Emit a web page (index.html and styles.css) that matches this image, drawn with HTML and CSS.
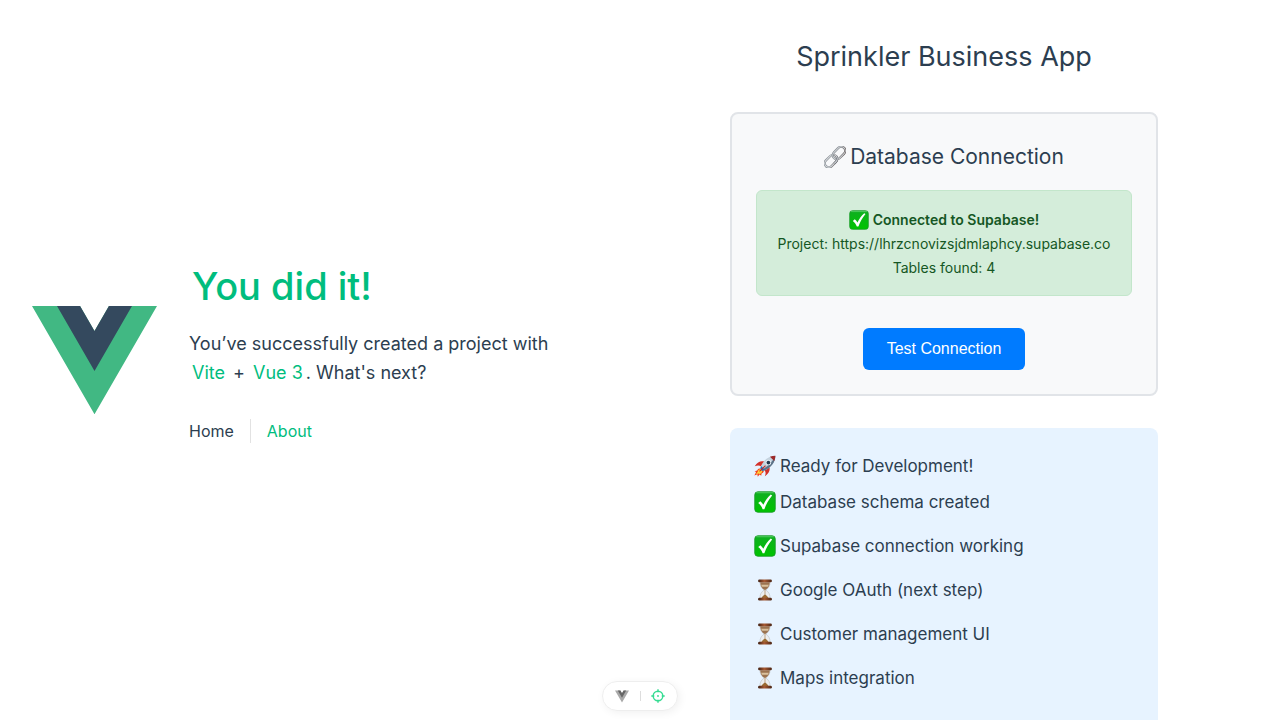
FILE: index.html
```html
<!DOCTYPE html>
<html lang="en">
<head>
<meta charset="utf-8">
<meta name="viewport" content="width=device-width, initial-scale=1">
<title>Sprinkler Business App</title>
<link rel="stylesheet" href="styles.css">
</head>
<body>
<svg class="sprite" aria-hidden="true">
  <defs>
    <linearGradient id="g-check" x1="0" y1="0" x2="0" y2="1"><stop offset="0" stop-color="#0fae22"/><stop offset="1" stop-color="#00c400"/></linearGradient>
    <linearGradient id="g-wood" x1="0" y1="0" x2="1" y2="0"><stop offset="0" stop-color="#3d1c0e"/><stop offset=".45" stop-color="#a85a33"/><stop offset="1" stop-color="#4a2413"/></linearGradient>
    <linearGradient id="g-link" x1="0" y1="0" x2="1" y2="1"><stop offset="0" stop-color="#7f858b"/><stop offset=".5" stop-color="#8d9297"/><stop offset="1" stop-color="#51433f"/></linearGradient>
  </defs>
  <symbol id="check" viewBox="0 0 24 24">
    <rect x=".8" y=".8" width="22.400" height="22.400" rx="3.500" fill="url(#g-check)" stroke="#1c9a2b" stroke-width=".9"/>
    <path d="M2.500 1.900h19" stroke="#6bd878" stroke-width=".8"/>
    <path d="M4.600 13.200 6.900 11.200c1.500 1.100 2.500 2.400 3.300 3.700C12 10.800 14.800 6.900 18.300 3.800l1.500 1C16 9.300 13.200 14.300 11.300 19.900H9.400C8.400 17 6.900 15 4.600 13.200Z" fill="#fff"/>
  </symbol>
  <symbol id="hourglass" viewBox="0 0 24 24">
    <path d="M6.500 3h11c0 4.500-1.500 6.800-4.600 9 3.100 2.200 4.600 4.500 4.600 9h-11c0-4.500 1.500-6.800 4.600-9-3.100-2.200-4.600-4.500-4.600-9Z" fill="#eceeef" stroke="#bcc0c3" stroke-width=".7"/>
    <path d="M6.800 3.500h10.400c0 4-1.700 6.300-4.600 8.300h-1.200C8.500 9.800 6.800 7.500 6.800 3.500Z" fill="#9b7350"/>
    <path d="M7.800 6.200h8.400l-1 2.300H8.800Z" fill="#d9c09c"/>
    <path d="M11.700 11h.6v5.500h-.6ZM8.200 20.800c.6-1.800 2-2.600 3.800-4.300 1.800 1.700 3.200 2.500 3.800 4.300Z" fill="#9a6b33"/>
    <rect x="4.500" y=".6" width="15" height="2.900" rx="1.300" fill="url(#g-wood)"/>
    <rect x="4.500" y="20.500" width="15" height="2.900" rx="1.300" fill="url(#g-wood)"/>
  </symbol>
  <symbol id="rocket" viewBox="0 0 24 24">
    <path d="M8.500 14.500C6 14.300 4 15.200 3.500 17L.6 17.600l1.700.9L.4 22.300l3.300-1.200.4 2.500 2-2.400 1.800 1.500.3-2.500c1.800-.7 2.700-2 2.500-3.500Z" fill="#f4431c"/>
    <path d="M7.500 15.600c-2 .2-3.200 1.400-3.400 2.700l-2 2.700 3-.9 1.200.6c1.600-.7 2.500-1.900 2.600-3.100Z" fill="#ffd33c"/>
    <path d="M11.500 7.300C7.500 6 3.800 7.600.8 12.200c3-1.200 5.400-1 7 .3ZM16.700 12.600c1.300 3.900-.4 7.500-4.800 10.600 1.200-3 1-5.200-.6-6.900Z" fill="#d3302a"/>
    <path d="M23.300.7C16.300 1 11 4.700 7.200 12.600l-.6 2.500 2.300 2.300 2.500-.6C19.300 13 23.100 7.900 23.300.7Z" fill="#c4d2de"/>
    <path d="M23.300.7c-.2 7.200-4 12.300-11.900 16.100l-2.500.6-1.100-1.100C15.500 12.500 20 7.500 23.300.7Z" fill="#5c7389"/>
    <path d="M23.300.7c-2.100 0-4.200.4-5.900 1.200l4.700 4.700c.7-1.800 1.100-3.800 1.200-5.900Z" fill="#9d2a2b"/>
    <circle cx="15.700" cy="8.300" r="3" fill="#e7eef4"/><circle cx="15.700" cy="8.300" r="2" fill="#23394f"/>
    <path d="m8 12 3.500 4-2.300 1-2.400-2.400Z" fill="#1b70c4"/>
    <path d="m12.100 11.100.9.900-6.500 6.300-.9-.8Z" fill="#c5241e"/>
  </symbol>
  <symbol id="link" viewBox="0 0 24 24">
    <g fill="none" transform="rotate(-45 12 12)">
      <rect x="-2" y="7.600" width="15.600" height="8.800" rx="4.400" stroke="url(#g-link)" stroke-width="2.500"/>
      <rect x="-2" y="7.600" width="15.600" height="8.800" rx="4.400" stroke="#d7dbde" stroke-width="1.200"/>
      <rect x="10.400" y="7.600" width="15.600" height="8.800" rx="4.400" stroke="url(#g-link)" stroke-width="2.500"/>
      <rect x="10.400" y="7.600" width="15.600" height="8.800" rx="4.400" stroke="#cfd3d6" stroke-width="1.100"/>
      <path d="M6.500 16.400h2.700a4.400 4.400 0 0 0 4.400-4.400" stroke="#6d7278" stroke-width="2.400"/>
      <path d="M6.500 16.400h2.700a4.400 4.400 0 0 0 4.400-4.400" stroke="#d7dbde" stroke-width="1.100"/>
    </g>
  </symbol>
</svg>

<div class="app">
  <header class="intro">
    <svg class="logo" viewBox="0 0 261.76 226.69" role="img" aria-label="Vue logo">
      <path d="M161.096.001l-30.225 52.351L100.647.001H-.005l130.877 226.688L261.749.001z" fill="#41b883"/>
      <path d="M161.096.001l-30.225 52.351L100.647.001H52.346l78.526 136.010L209.398.001z" fill="#34495e"/>
    </svg>
    <div class="intro-text">
      <h1 class="greeting">You did it!</h1>
      <p class="lead">You’ve successfully created a project with <a class="link" href="#vite">Vite</a> + <a class="link" href="#vue">Vue 3</a>. What's next?</p>
      <nav class="nav">
        <a class="nav-link current" href="#home">Home</a>
        <a class="nav-link" href="#about">About</a>
      </nav>
    </div>
  </header>

  <main class="content">
    <h2 class="title">Sprinkler Business App</h2>
    <section class="card">
      <h3 class="card-title"><svg class="emoji"><use href="#link"/></svg>Database Connection</h3>
      <div class="status">
        <strong class="status-head"><svg class="emoji"><use href="#check"/></svg>Connected to Supabase!</strong>
        <span>Project: https://lhrzcnovizsjdmlaphcy.supabase.co</span>
        <span>Tables found: 4</span>
      </div>
      <button class="button" type="button">Test Connection</button>
    </section>
    <section class="steps">
      <h3 class="step-title"><svg class="emoji"><use href="#rocket"/></svg>Ready for Development!</h3>
      <ul class="step-list">
        <li class="step"><svg class="emoji"><use href="#check"/></svg>Database schema created</li>
        <li class="step"><svg class="emoji"><use href="#check"/></svg>Supabase connection working</li>
        <li class="step"><svg class="emoji"><use href="#hourglass"/></svg>Google OAuth (next step)</li>
        <li class="step"><svg class="emoji"><use href="#hourglass"/></svg>Customer management UI</li>
        <li class="step"><svg class="emoji"><use href="#hourglass"/></svg>Maps integration</li>
      </ul>
    </section>
  </main>
</div>

<div class="devtools">
  <button class="tool" type="button" aria-label="Toggle devtools">
    <svg class="tool-logo" viewBox="0 0 262 227"><path d="M161 0l-30 52L101 0H0l131 227L262 0z" fill="#a9a9a9"/><path d="M161 0l-30 52L101 0H52l79 136L209 0z" fill="#666"/></svg>
  </button>
  <span class="divider"></span>
  <button class="tool" type="button" aria-label="Inspect component">
    <svg class="tool-target" viewBox="0 0 14 14" fill="none" stroke="#35dc92" stroke-width="1.400"><circle cx="7" cy="7" r="4.800"/><path d="M7 .3v3M7 10.700v3M.3 7h3M10.700 7h3"/><circle cx="7" cy="7" r=".9" fill="#35dc92" stroke="none"/></svg>
  </button>
</div>
</body>
</html>
```
FILE: styles.css
```css
*, *::before, *::after { box-sizing: border-box; margin: 0; }
body {
  min-height: 100vh;
  background: #fff;
  color: #2c3e50;
  font: 400 15px/24px Inter, "Liberation Sans", sans-serif;
  scrollbar-width: none;
}
h1, h2, h3 { font-weight: 400; }
a { color: #00bd7e; text-decoration: none; }
.sprite { position: absolute; width: 0; height: 0; }
.app {
  display: grid;
  grid-template-columns: 1fr 1fr;
  max-width: 1280px;
  margin: 0 auto;
  padding: 0 32px;
}
.intro {
  display: flex;
  align-items: center;
  gap: 32px;
  height: 100vh;
  padding-right: 80px;
}
.logo { width: 125px; flex: none; }
.greeting { margin-bottom: 18px; padding-left: 3px; color: #00bd7e; font-size: 38px; font-weight: 500; line-height: 50px; }
.lead { font-size: 18px; line-height: 29px; }
.link { padding: 3px; }
.nav { display: flex; padding: 32px 0 16px; font-size: 16px; }
.nav-link { padding: 0 16px; border-left: 1px solid #e2e2e2; }
.nav-link.current { padding-left: 0; border: 0; color: #2c3e50; }
.content {
  display: flex;
  flex-direction: column;
  gap: 32px;
  width: 100%;
  max-width: 428px;
  margin: 0 auto;
  padding: 32px 0;
}
.title { padding-top: 2px; font-size: 27px; line-height: 46px; text-align: center; }
.card {
  display: flex;
  flex-direction: column;
  align-items: center;
  padding: 24px;
  border: 2px solid #e1e4e8;
  border-radius: 8px;
  background: #f8f9fa;
}
.card-title, .status-head, .step-title, .step { display: flex; align-items: center; }
.emoji { flex: none; width: 22px; height: 22px; margin-right: 4px; overflow: visible; }
.card-title { margin-bottom: 14px; font-size: 21px; line-height: 38px; }
.status {
  display: flex;
  flex-direction: column;
  align-items: center;
  align-self: stretch;
  margin-bottom: 32px;
  padding: 17px 0 15px;
  border: 1px solid #c3e6cb;
  border-radius: 6px;
  background: #d4edda;
  color: #155724;
  font-size: 14px;
}
.status-head { font-weight: 600; }
.status-head .emoji { width: 20px; height: 20px; }
.button {
  padding: 12px 24px;
  border: 0;
  border-radius: 6px;
  background: #007bff;
  color: #fff;
  font: 16px/18px "Liberation Sans", sans-serif;
}
.steps { padding: 24px 24px 40px; border-radius: 8px; background: #e7f3ff; font-size: 17px; line-height: 28px; }
.step-title { font-size: 17px; }
.step-list { padding: 0; list-style: none; }
.step { padding: 8px 0; }
.devtools {
  position: fixed;
  bottom: 9px;
  left: 50%;
  transform: translateX(-50%);
  display: flex;
  align-items: center;
  justify-content: space-between;
  width: 76px;
  height: 30px;
  padding: 0 12px;
  border: 1px solid #eee;
  border-radius: 15px;
  background: #fff;
  box-shadow: 2px 2px 8px rgba(0, 0, 0, 0.06);
}
.tool { display: flex; padding: 0; border: 0; background: none; }
.tool-logo { width: 14px; height: 13px; }
.tool-target { width: 14px; height: 14px; }
.divider { width: 1px; height: 10px; background: #ddd; }
```
